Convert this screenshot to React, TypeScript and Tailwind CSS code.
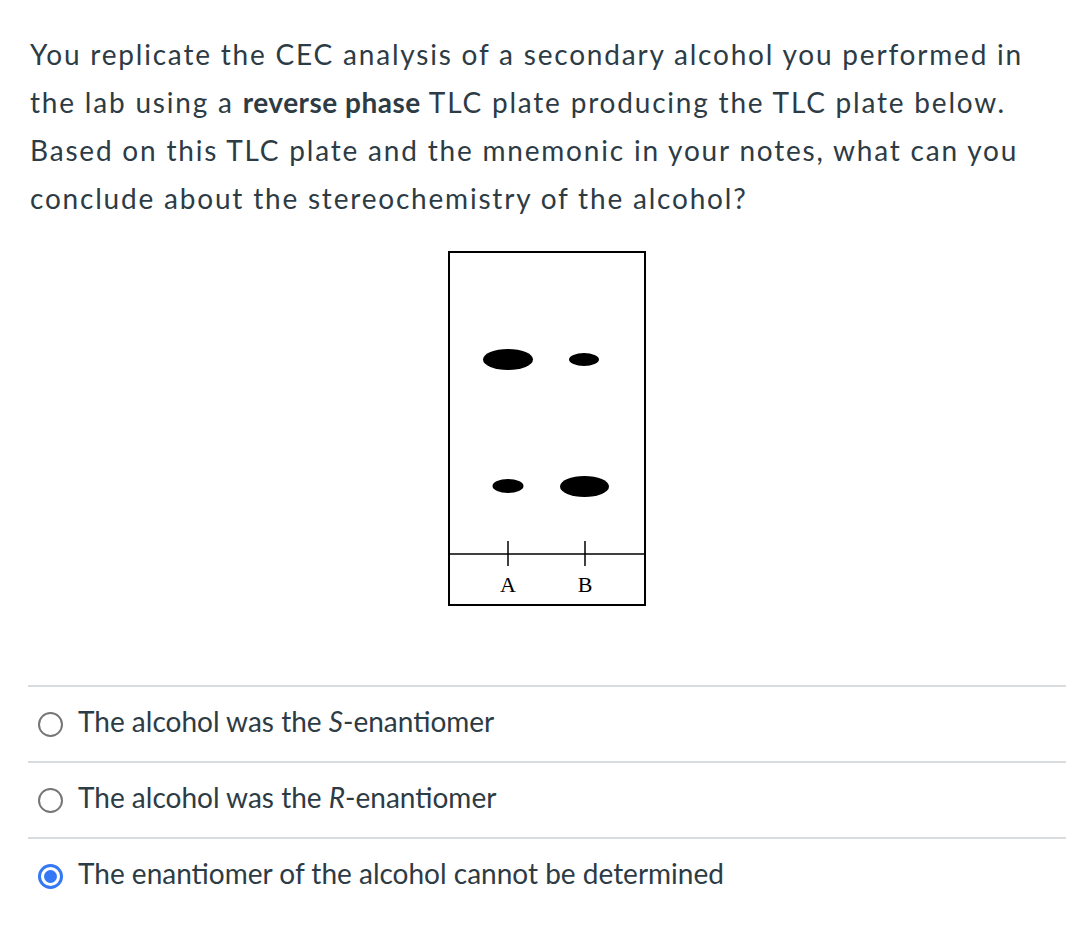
const answers = [
  { id: 's', pre: 'The alcohol was the ', em: 'S', post: '-enantiomer', checked: false },
  { id: 'r', pre: 'The alcohol was the ', em: 'R', post: '-enantiomer', checked: false },
  { id: 'x', pre: 'The enantiomer of the alcohol cannot be determined', em: '', post: '', checked: true },
]

function TlcPlate() {
  return (
    <svg width="198" height="355" viewBox="0 0 198 355" className="block">
      <rect x="1" y="1" width="196" height="353" fill="#fff" stroke="#000" strokeWidth="2" />
      <line x1="1" y1="303" x2="197" y2="303" stroke="#000" strokeWidth="1.5" />
      <line x1="60" y1="290" x2="60" y2="315" stroke="#000" strokeWidth="1.5" />
      <line x1="137" y1="290" x2="137" y2="315" stroke="#000" strokeWidth="1.5" />
      <ellipse cx="60" cy="108.5" rx="25" ry="10.5" fill="#000" />
      <ellipse cx="136" cy="108.5" rx="15" ry="6.5" fill="#000" />
      <ellipse cx="60" cy="235" rx="15.5" ry="7" fill="#000" />
      <ellipse cx="136.5" cy="235.5" rx="24.5" ry="10.5" fill="#000" />
      <text x="60" y="341" textAnchor="middle" fontSize="22" fontFamily="'Liberation Serif', serif" fill="#000">
        A
      </text>
      <text x="137" y="341" textAnchor="middle" fontSize="22" fontFamily="'Liberation Serif', serif" fill="#000">
        B
      </text>
    </svg>
  )
}

function Radio({ checked }: { checked: boolean }) {
  if (checked) {
    return (
      <span className="flex h-[25px] w-[25px] items-center justify-center rounded-full border-[3px] border-[#3478f6] bg-white">
        <span className="h-[13px] w-[13px] rounded-full bg-[#3478f6]" />
      </span>
    )
  }
  return <span className="block h-[25px] w-[25px] rounded-full border-2 border-[#767676] bg-white" />
}

export default function App() {
  return (
    <div className="min-h-[932px] bg-white pl-[28px] pr-[18px] font-['Lato','Noto_Sans',sans-serif] text-[28px] leading-[48px] text-[#2d3b45]">
      <p className="pl-[2px] pt-[30px] tracking-[1.8px]">
        You replicate the CEC analysis of a secondary alcohol you performed in the lab using a{' '}
        <strong className="font-bold tracking-[0.5px]">reverse phase</strong> TLC plate producing the TLC plate
        below. Based on this TLC plate and the mnemonic in your notes, what can you conclude about the
        stereochemistry of the alcohol?
      </p>
      <div className="mt-[29px] flex justify-center">
        <TlcPlate />
      </div>
      <div className="mt-[79px]">
        {answers.map(a => (
          <div key={a.id} className="flex items-start border-t-2 border-[#d9dcde] pb-[16px] pt-[10px]">
            <div className="mt-[15px] w-[50px] shrink-0 pl-[10px]">
              <Radio checked={a.checked} />
            </div>
            <span>
              {a.pre}
              {a.em ? <em className="italic">{a.em}</em> : null}
              {a.post}
            </span>
          </div>
        ))}
      </div>
    </div>
  )
}
